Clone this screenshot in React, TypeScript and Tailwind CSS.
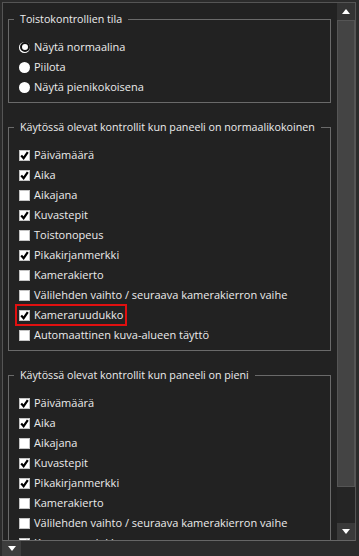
import React from 'react';

const font = { fontFamily: '"Open Sans", "DejaVu Sans", sans-serif' };

function Check({ on }: { on: boolean }) {
  return (
    <span className="flex h-[11px] w-[11px] shrink-0 items-center justify-center border border-[#c4c4c4] bg-white">
      {on && (
        <svg width="9" height="9" viewBox="0 0 9 9">
          <path d="M1.2 4.6 L3.6 7.2 L7.8 1.2" fill="none" stroke="#000" strokeWidth="2.2" />
        </svg>
      )}
    </span>
  );
}

function Radio({ on }: { on: boolean }) {
  return (
    <span className="flex h-[11px] w-[11px] shrink-0 items-center justify-center rounded-full bg-white">
      {on && <span className="h-[10px] w-[10px] rounded-full border-[2px] border-[#111] bg-white" />}
    </span>
  );
}

function Row({ label, on, radio, marked }: { label: string; on?: boolean; radio?: boolean; marked?: boolean }) {
  return (
    <div className="flex h-[20px] items-center">
      <label
        className={`flex items-center gap-[4px] ${
          marked ? 'outline-2 outline-offset-[2px] outline-[#e01010]' : ''
        }`}
      >
        {radio ? <Radio on={!!on} /> : <Check on={!!on} />}
        <span className="whitespace-nowrap text-[11px] leading-[14px] text-[#ececec]">{label}</span>
      </label>
    </div>
  );
}

function Group({ title, children }: { title: string; children: React.ReactNode }) {
  return (
    <fieldset className="ml-[5px] mr-[6px] border border-[#6a6a6a] pb-[5px] pl-[10px]">
      <legend className="ml-[-5px] px-[6px] text-[10.7px] leading-[14px] text-[#ececec]">{title}</legend>
      <div className="pt-[11px]">{children}</div>
    </fieldset>
  );
}

const normal: [string, boolean][] = [
  ['Päivämäärä', true],
  ['Aika', true],
  ['Aikajana', false],
  ['Kuvastepit', true],
  ['Toistonopeus', false],
  ['Pikakirjanmerkki', true],
  ['Kamerakierto', false],
  ['Välilehden vaihto / seuraava kamerakierron vaihe', false],
  ['Kameraruudukko', true],
  ['Automaattinen kuva-alueen täyttö', false],
];

const small: [string, boolean][] = [
  ['Päivämäärä', true],
  ['Aika', true],
  ['Aikajana', false],
  ['Kuvastepit', true],
  ['Pikakirjanmerkki', true],
  ['Kamerakierto', false],
  ['Välilehden vaihto / seuraava kamerakierron vaihe', false],
  ['Kameraruudukko', true],
];

export default function App() {
  return (
    <div className="flex h-[556px] w-[359px] flex-col bg-[#2b2b2b]" style={font}>
      <div className="ml-[2px] mr-[3px] mt-[2px] flex h-[539px] border border-b-[#666] border-l-[#555] border-r-[#555] border-t-[#555] bg-[#222]">
        <div className="flex-1 overflow-hidden">
          <div className="flex flex-col gap-[17px] pt-[9px]">
            <Group title="Toistokontrollien tila">
              <Row label="Näytä normaalina" radio on />
              <Row label="Piilota" radio />
              <Row label="Näytä pienikokoisena" radio />
            </Group>
            <Group title="Käytössä olevat kontrollit kun paneeli on normaalikokoinen">
              {normal.map(([l, on]) => (
                <Row key={l} label={l} on={on} marked={l === 'Kameraruudukko'} />
              ))}
            </Group>
            <Group title="Käytössä olevat kontrollit kun paneeli on pieni">
              {small.map(([l, on]) => (
                <Row key={l} label={l} on={on} />
              ))}
            </Group>
          </div>
        </div>
        <div className="flex w-[18px] flex-col bg-[#2e2e2e]">
          <div className="flex h-[17px] items-center justify-center bg-[#333]">
            <svg width="8" height="5" viewBox="0 0 8 5">
              <path d="M0 5 L4 0 L8 5 Z" fill="#fff" />
            </svg>
          </div>
          <div className="h-[467px] border border-[#555] bg-[#444]" />
          <div className="flex-1 bg-[#252525]" />
          <div className="flex h-[17px] items-center justify-center bg-[#3a3a3a]">
            <svg width="8" height="5" viewBox="0 0 8 5">
              <path d="M0 0 L8 0 L4 5 Z" fill="#fff" />
            </svg>
          </div>
        </div>
      </div>
      <div className="flex flex-1">
        <div className="ml-[2px] flex w-[19px] items-center justify-center bg-[#3d3d3d]">
          <svg width="8" height="5" viewBox="0 0 8 5">
            <path d="M0 0 L8 0 L4 5 Z" fill="#fff" />
          </svg>
        </div>
      </div>
    </div>
  );
}
